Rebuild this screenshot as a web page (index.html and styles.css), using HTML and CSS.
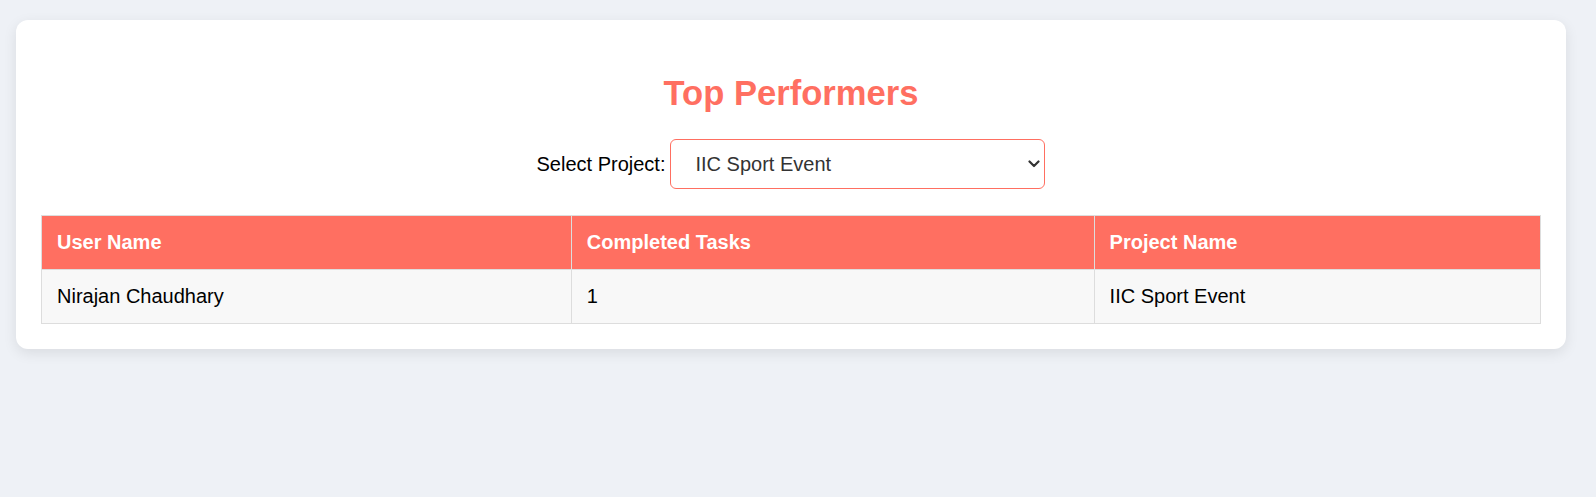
FILE: index.html
```html
<!DOCTYPE html>
<html lang="en">
<head>
<meta charset="utf-8">
<title>Top Performers</title>
<link rel="stylesheet" href="styles.css">
</head>
<body>
<div class="page">
  <div class="card">
    <h2 class="title">Top Performers</h2>
    <div class="picker">
      <label class="picker-label" for="project">Select Project:</label>
      <div class="select-wrap">
        <select id="project" class="select">
          <option>IIC Sport Event</option>
        </select>
        <svg class="chevron" width="12" height="8" viewBox="0 0 12 8" aria-hidden="true">
          <path d="M1.5 1.5 L6 6 L10.5 1.5" fill="none" stroke="#333" stroke-width="2.2" stroke-linecap="round" stroke-linejoin="round"/>
        </svg>
      </div>
    </div>
    <table class="table">
      <thead>
        <tr>
          <th>User Name</th>
          <th>Completed Tasks</th>
          <th>Project Name</th>
        </tr>
      </thead>
      <tbody>
        <tr>
          <td>Nirajan Chaudhary</td>
          <td>1</td>
          <td>IIC Sport Event</td>
        </tr>
      </tbody>
    </table>
  </div>
</div>
</body>
</html>
```
FILE: styles.css
```css
* { box-sizing: border-box; }

html, body {
  margin: 0;
  padding: 0;
  background: #eef1f6;
  font-family: "Liberation Sans", Arial, sans-serif;
  color: #000;
}

.page {
  padding: 20px 30px 20px 16px;
}

.card {
  background: #ffffff;
  border-radius: 12px;
  padding: 25px;
  box-shadow: 0 4px 14px rgba(0, 0, 0, 0.09);
}

.title {
  margin: 29px 0 27px;
  text-align: center;
  font-size: 34.6px;
  font-weight: bold;
  line-height: 38px;
  color: #ff6f61;
}

.picker {
  display: flex;
  justify-content: center;
  align-items: center;
  gap: 5px;
  margin-bottom: 26px;
}

.picker-label {
  font-size: 20px;
  color: #000;
}

.select-wrap {
  position: relative;
  width: 375px;
  height: 50px;
}

.select {
  -webkit-appearance: none;
  appearance: none;
  width: 100%;
  height: 100%;
  border: 1px solid #ff6f61;
  border-radius: 6px;
  background: #ffffff;
  padding: 0 30px 0 24px;
  font-family: "Liberation Sans", Arial, sans-serif;
  font-size: 20px;
  color: #333;
  outline: none;
}

.chevron {
  position: absolute;
  right: 5px;
  top: 21px;
  pointer-events: none;
}

.table {
  width: 100%;
  border-collapse: collapse;
  font-size: 20px;
}

.table th,
.table td {
  border: 1px solid #dddddd;
  padding: 15px;
  text-align: left;
  line-height: 23px;
}

.table th {
  background: #ff6f61;
  color: #ffffff;
  font-weight: bold;
}

.table td {
  background: #f8f8f8;
  color: #000;
}
```
